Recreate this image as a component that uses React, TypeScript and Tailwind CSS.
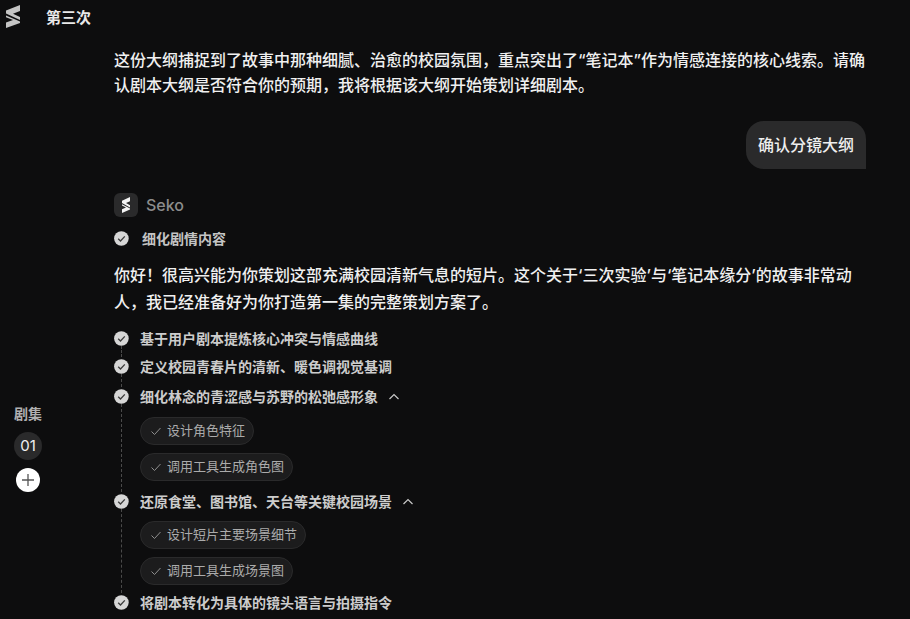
const font = "font-['Inter','Noto_Sans_CJK_SC',sans-serif]";

function Logo({ className }: { className: string }) {
  return (
    <svg viewBox="0 0 14 23" preserveAspectRatio="none" className={className} fill="currentColor">
      <path d="M14 0 L14 6 L7 8.8 L14 12 L14 15 L0 8.6 L0 5.5 Z" />
      <path d="M0 10.4 L14 16.6 L14 18 L0 23 L0 17.6 L7 15 L0 12.2 Z" />
    </svg>
  );
}

function CheckDot() {
  return (
    <svg viewBox="0 0 15 15" className="w-[15px] h-[15px] shrink-0">
      <circle cx="7.4" cy="7.5" r="7.3" fill="#d6d6d6" />
      <path d="M4.2 7.8 L6.5 10 L10.8 5.4" fill="none" stroke="#3a3a3a" strokeWidth="1.3" />
    </svg>
  );
}

function Chip({ text }: { text: string }) {
  return (
    <div className="h-[28px] self-start flex items-center gap-[5px] pl-[9px] pr-[8px] rounded-full bg-[#1c1c1d] border border-[#2a2a2b] text-[13px] text-[#ababab]">
      <svg viewBox="0 0 12 12" className="w-[12px] h-[12px]" fill="none" stroke="#8f8f8f" strokeWidth="1">
        <path d="M1.5 6.5 L4.5 9.5 L10.5 3" />
      </svg>
      <span>{text}</span>
    </div>
  );
}

function Step({ text, h, open, chips, last, mt, mb }: { text: string; h?: string; open?: boolean; chips?: string[]; last?: boolean; mt?: string; mb?: string }) {
  return (
    <div className={`flex gap-[11px] ${h ?? ""}`}>
      <div className="w-[15px] flex flex-col items-center pt-[2px]">
        <CheckDot />
        {!last && <div className="flex-1 border-l border-dashed border-[#4a4a4a]" />}
      </div>
      <div className="flex flex-col">
        <div className="h-[20px] flex items-center text-[14px] leading-[20px] font-semibold text-[#cccccc]">
          <span>{text}</span>
          {open && (
            <svg viewBox="0 0 12 12" className="w-[12px] h-[12px] ml-[10px]" fill="none" stroke="#c8c8c8" strokeWidth="1.2">
              <path d="M1.5 8 L6 3.5 L10.5 8" />
            </svg>
          )}
        </div>
        {chips && (
          <div className={`flex flex-col gap-[8px] ${mt ?? ""} ${mb ?? ""}`}>
            {chips.map((c) => (
              <Chip key={c} text={c} />
            ))}
          </div>
        )}
      </div>
    </div>
  );
}

export default function App() {
  return (
    <div className={`h-[619px] overflow-hidden flex bg-[#0d0d0e] ${font}`}>
      <aside className="w-[46px] shrink-0 flex flex-col">
        <Logo className="w-[14px] h-[23px] ml-[6px] mt-[5px] text-[#c4c4c4]" />
        <div className="mt-[376px] ml-[14px] w-[28px] flex flex-col items-center">
          <div className="text-[14px] leading-[20px] font-semibold text-[#b0b0b0] whitespace-nowrap">剧集</div>
          <div className="mt-[8px] w-[28px] h-[28px] rounded-full bg-[#2a2a2b] flex items-center justify-center text-[15px] text-[#f0f0f0]">01</div>
          <div className="mt-[8px] w-[24px] h-[24px] rounded-full bg-white flex items-center justify-center">
            <svg viewBox="0 0 14 14" className="w-[14px] h-[14px]" fill="none" stroke="#555" strokeWidth="1.3">
              <path d="M7 1 V13 M1 7 H13" />
            </svg>
          </div>
        </div>
      </aside>
      <main className="flex-1 flex flex-col min-w-0">
        <header className="h-[36px] flex items-center text-[15px] font-semibold text-[#e8e8e8]">第三次</header>
        <div className="pl-[68px] pr-[44px] flex flex-col">
          <p className="mt-[12px] text-[16px] leading-[25px] font-medium text-[#f0f0f0]">
            这份大纲捕捉到了故事中那种细腻、治愈的校园氛围，重点突出了“笔记本”作为情感连接的核心线索。请确认剧本大纲是否符合你的预期，我将根据该大纲开始策划详细剧本。
          </p>
          <div className="mt-[23px] self-end h-[48px] px-[12px] flex items-center rounded-[18px] rounded-br-none bg-[#2a2a2b] text-[16px] font-medium text-[#eeeeee]">
            确认分镜大纲
          </div>
          <div className="mt-[24px] flex items-center gap-[8px]">
            <div className="w-[24px] h-[24px] rounded-[6px] bg-[#2a2a2b] flex items-center justify-center">
              <Logo className="w-[8px] h-[16px] text-[#f5f5f5]" />
            </div>
            <span className="text-[16px] font-medium text-[#8c8c8c]">Seko</span>
          </div>
          <div className="mt-[11px] h-[20px] flex items-center gap-[13px] text-[14px] font-semibold text-[#c4c4c4]">
            <CheckDot />
            <span>细化剧情内容</span>
          </div>
          <p className="mt-[14px] text-[16px] leading-[27px] font-medium text-[#f0f0f0]">
            你好！很高兴能为你策划这部充满校园清新气息的短片。这个关于‘三次实验’与‘笔记本缘分’的故事非常动人，我已经准备好为你打造第一集的完整策划方案了。
          </p>
          <div className="mt-[13px] flex flex-col">
            <Step h="h-[28px]" text="基于用户剧本提炼核心冲突与情感曲线" />
            <Step h="h-[30px]" text="定义校园青春片的清新、暖色调视觉基调" />
            <Step open mt="mt-[10px]" mb="mb-[11px]" text="细化林念的青涩感与苏野的松弛感形象" chips={["设计角色特征", "调用工具生成角色图"]} />
            <Step open mt="mt-[9px]" mb="mb-[8px]" text="还原食堂、图书馆、天台等关键校园场景" chips={["设计短片主要场景细节", "调用工具生成场景图"]} />
            <Step last text="将剧本转化为具体的镜头语言与拍摄指令" />
          </div>
        </div>
      </main>
    </div>
  );
}
